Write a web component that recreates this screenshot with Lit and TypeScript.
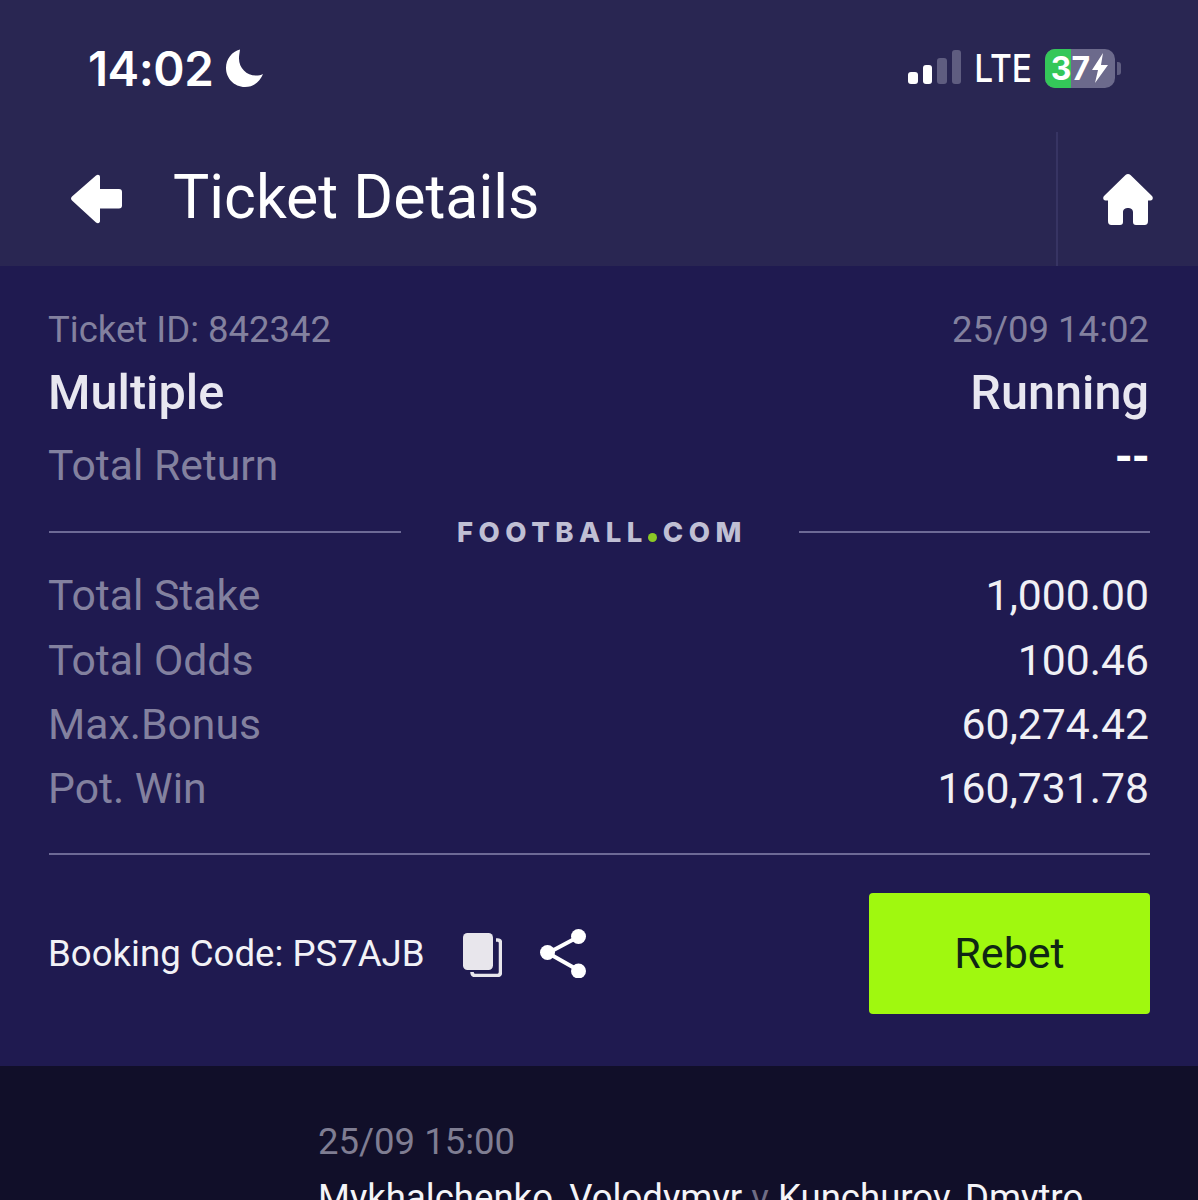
import { css, html, LitElement } from 'lit';
import { customElement } from 'lit/decorators.js';

const totals = [
  ['Total Stake', '1,000.00'],
  ['Total Odds', '100.46'],
  ['Max.Bonus', '60,274.42'],
  ['Pot. Win', '160,731.78'],
];

@customElement('app-root')
export default class AppRoot extends LitElement {
  render() {
    return html`<div class="page">
      <header class="top">
        <div class="status">
          <div class="clock">
            <span>14:02</span>
            <svg class="moon" width="40" height="40" viewBox="0 0 40 40">
              <path fill="#fff" d="M15 1.500C7 3.500 1 11 1 20c0 10 8 19 19 19 8 0 15-5 18-13-2 1-4.500 1.500-7 1.500C21.500 27.500 14 20 14 10.500c0-3 .7-6 1-9z"/>
            </svg>
          </div>
          <div class="network">
            <div class="signal">
              <i class="on b1"></i>
              <i class="on b2"></i>
              <i class="b3"></i>
              <i class="b4"></i>
            </div>
            <span class="lte">LTE</span>
            <div class="battery">
              <div class="charge"></div>
              <span>37</span>
              <svg width="18" height="30" viewBox="0 0 18 30">
                <path fill="#fff" d="M12 0 1 17h6L4 30l13-18h-7z"/>
              </svg>
            </div>
            <div class="cap"></div>
          </div>
        </div>
        <nav class="nav">
          <svg class="back" width="52" height="52" viewBox="0 0 52 52">
            <path fill="#fff" d="M25 2.500 1 23.500c-1.300 1.300-1.300 2.700 0 4l24 22c2 1.500 4 .5 4-1.500V35.500h19c2 0 3-1 3-3V19c0-2-1-3-3-3H29V4c0-2-2-3-4-1.500z"/>
          </svg>
          <h1>Ticket Details</h1>
          <div class="home">
            <svg width="50" height="52" viewBox="0 0 50 52">
              <path fill="#fff" d="M22.500 2 1 23c-1.500 1.500-.8 4.500 1.500 4.500H5V48c0 2.500 1 4 3.500 4H17c2 0 3-1 3-3V39c0-5.500 10-5.500 10 0v10c0 2 1 3 3 3h8.500c2.500 0 3.500-1.500 3.500-4V27.500h2.500c2.300 0 3-3 1.500-4.500L27.500 2c-1.500-1.300-3.500-1.300-5 0z"/>
            </svg>
          </div>
        </nav>
      </header>

      <section class="ticket">
        <div class="row meta"><span>Ticket ID: 842342</span><span>25/09 14:02</span></div>
        <div class="row strong"><span>Multiple</span><span>Running</span></div>
        <div class="row total"><span>Total Return</span><span class="dash">--</span></div>
        <div class="brand">
          <hr />
          <span class="logo">FOOTBALL<b></b>COM</span>
          <hr />
        </div>
        <div class="totals">
          ${totals.map(([k, v]) => html`<div class="row amount"><span>${k}</span><span>${v}</span></div>`)}
        </div>
        <hr class="rule" />
        <div class="actions">
          <span class="code">Booking Code: PS7AJB</span>
          <svg class="copy" width="39" height="44" viewBox="0 0 39 44">
            <rect x="0" y="0" width="30" height="37" rx="4.500" fill="#e8e6ec"/>
            <path fill="none" stroke="#e8e6ec" stroke-width="3.500" d="M33 7h1.500c2 0 3 1 3 3v29c0 2-1 3.500-3 3.500H12c-2 0-3-1-3-3.500"/>
          </svg>
          <svg class="share" width="47" height="50" viewBox="0 0 47 50">
            <path stroke="#fff" stroke-width="4" fill="none" d="M38 9 8 25l30 17"/>
            <circle cx="38.500" cy="8.500" r="7.500" fill="#fff"/>
            <circle cx="7.500" cy="24.500" r="7.500" fill="#fff"/>
            <circle cx="38.500" cy="43" r="7.500" fill="#fff"/>
          </svg>
          <button class="rebet">Rebet</button>
        </div>
      </section>

      <section class="event">
        <div class="when">25/09 15:00</div>
        <div class="teams">Mykhalchenko, Volodymyr <em>v</em> Kunchurov, Dmytro</div>
      </section>
    </div>`;
  }

  static get styles() {
    return [
      css`
        :host {
          display: block;
          font-family: Roboto, sans-serif;
        }

        .page {
          width: 1198px;
          height: 1200px;
          overflow: hidden;
          display: flex;
          flex-direction: column;
          background: #110f29;
        }

        .top {
          height: 266px;
          flex: none;
          background: #292652;
          display: flex;
          flex-direction: column;
        }

        .status {
          height: 132px;
          flex: none;
          display: flex;
          justify-content: space-between;
          align-items: center;
          padding: 4px 77px 0 88px;
          box-sizing: border-box;
          color: #fff;
        }

        .clock {
          display: flex;
          align-items: center;
          gap: 12px;
          font-family: Inter, sans-serif;
          font-size: 47.500px;
          font-weight: 600;
          letter-spacing: -0.5px;
        }

        .network {
          display: flex;
          align-items: center;
        }

        .signal {
          display: flex;
          align-items: flex-end;
          gap: 5px;
          height: 34px;
          margin-right: 13px;
          transform: translateY(-1px);
        }

        .signal i {
          width: 9.500px;
          border-radius: 3px;
          background: #5f5d80;
        }

        .signal i.on {
          background: #fff;
        }

        .b1 {
          height: 12px;
        }

        .b2 {
          height: 19px;
        }

        .b3 {
          height: 26px;
        }

        .b4 {
          height: 34px;
        }

        .lte {
          font-family: Inter, sans-serif;
          font-size: 33.500px;
          font-weight: 500;
          margin-right: 13px;
          transform: scaleY(1.15);
        }

        .battery {
          position: relative;
          width: 70px;
          height: 39px;
          border-radius: 10px;
          background: #6c6a8c;
          display: flex;
          align-items: center;
          justify-content: center;
          gap: 1px;
          overflow: hidden;
          font-family: Inter, sans-serif;
          font-size: 32px;
          font-weight: 700;
        }

        .charge {
          position: absolute;
          left: 0;
          top: 0;
          bottom: 0;
          width: 26px;
          background: #34c759;
        }

        .battery span,
        .battery svg {
          position: relative;
        }

        .cap {
          width: 4px;
          height: 13px;
          margin-left: 2px;
          border-radius: 0 3px 3px 0;
          background: #5f5d80;
        }

        .nav {
          flex: 1;
          display: flex;
          align-items: center;
          padding-left: 71px;
        }

        h1 {
          margin: -3px 0 0 50px;
          flex: 1;
          color: #fff;
          font-size: 60.800px;
          font-weight: 400;
        }

        .home {
          width: 142px;
          height: 100%;
          box-sizing: border-box;
          border-left: 2px solid #373463;
          display: flex;
          align-items: center;
          justify-content: center;
        }

        .ticket {
          height: 800px;
          flex: none;
          box-sizing: border-box;
          padding: 40px 49px 0;
          background: #1f1a50;
        }

        .row {
          display: flex;
          justify-content: space-between;
          align-items: center;
        }

        .row span:first-child {
          margin-left: -1px;
        }

        .meta {
          height: 46px;
          font-size: 36.500px;
          color: #83819f;
        }

        .strong {
          height: 80px;
          font-size: 48.600px;
          font-weight: 500;
          color: #e8e7f0;
        }

        .total {
          height: 66px;
          font-size: 42.700px;
          color: #83819f;
        }

        .dash {
          color: #fff;
          font-size: 46px;
          font-weight: 700;
          letter-spacing: -1px;
          transform: translateY(-8px);
        }

        .brand {
          display: flex;
          align-items: center;
          height: 64px;
          margin: 2px -1px 0 0;
        }

        .brand hr {
          flex: 1;
          margin: 0;
          border: 0;
          height: 2px;
          background: #6d6a96;
        }

        .logo {
          width: 398px;
          box-sizing: border-box;
          padding-left: 5px;
          text-align: center;
          font-size: 27.500px;
          font-weight: 800;
          letter-spacing: 5.500px;
          color: #c0bfd4;
          font-family: Inter, sans-serif;
        }

        .logo b {
          display: inline-block;
          width: 9px;
          height: 9px;
          margin: 0 6px 0 0;
          border-radius: 50%;
          background: #8bc926;
        }

        .totals {
          margin-top: -1px;
        }

        .amount {
          height: 64.400px;
          font-size: 42.700px;
          color: #83819f;
        }

        .amount span:last-child {
          color: #f0f0f5;
        }

        .rule {
          margin: 32px -1px 0 0;
          border: 0;
          height: 2px;
          background: #6d6a96;
        }

        .actions {
          display: flex;
          align-items: center;
          margin-top: 38px;
          color: #f2f2f6;
        }

        .code {
          font-size: 36.600px;
          margin: 0 38px 0 -1px;
        }

        .copy {
          margin: 3px 38px 0 0;
        }

        .rebet {
          margin: 0 -1px 0 auto;
          width: 281px;
          height: 121px;
          border: 0;
          border-radius: 4px;
          background: #a0f80f;
          color: #0f2614;
          font-family: Roboto, sans-serif;
          font-size: 43px;
        }

        .event {
          flex: 1;
          padding: 54px 0 0 318px;
        }

        .when {
          font-size: 36.500px;
          color: #7f7d92;
        }

        .teams {
          margin-top: 13px;
          font-size: 36.600px;
          color: #f4f4f8;
          white-space: nowrap;
        }

        .teams em {
          font-style: normal;
          color: #6f6d85;
        }
      `
    ];
  }
}
